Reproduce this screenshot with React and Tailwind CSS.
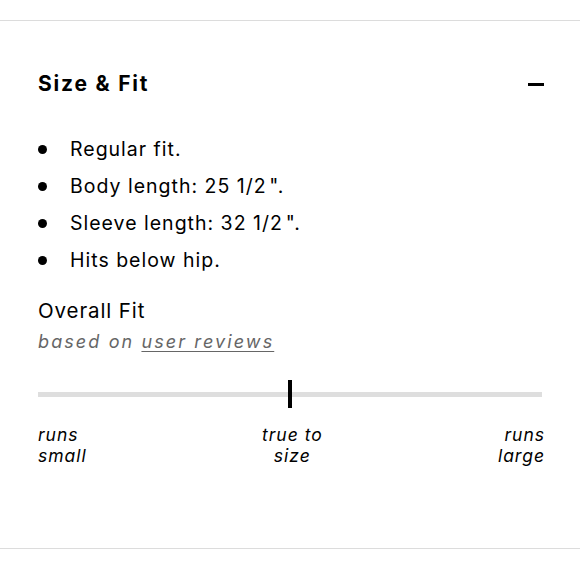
import React from 'react';

const facts = ['Regular fit.', 'Body length: 25 1/2\u200a".', 'Sleeve length: 32 1/2\u200a".', 'Hits below hip.'];

const SizeFit = () => {
  return (
    <div className="w-[580px] h-[580px] bg-white font-['Inter',sans-serif] text-black">
      <div className="pt-[20px]">
        <section className="border-t border-b border-[#dcdcdc] px-[38px] h-[529px]">
          {/* Header */}
          <div className="flex items-center justify-between pt-[49px]">
            <h2 className="text-[21px] font-bold leading-[28px] tracking-[1.8px]">Size &amp; Fit</h2>
            <div className="w-[16px] h-[3px] bg-black mr-[-2px]" />
          </div>

          {/* Facts */}
          <ul className="mt-[33px] flex flex-col">
            {facts.map((f) => (
              <li key={f} className="flex items-center h-[37px] text-[19.5px] tracking-[1px]">
                <span className="w-[9px] h-[9px] rounded-full bg-black mr-[23px]" />
                {f}
              </li>
            ))}
          </ul>

          {/* Overall fit */}
          <div className="mt-[19px]">
            <div className="text-[20.5px] leading-[26px] tracking-[0.9px]">Overall Fit</div>
            <div className="mt-[7px] text-[18px] italic text-[#666] tracking-[2.1px] leading-[22px]">
              based on <span className="underline underline-offset-[3px]">user reviews</span>
            </div>
          </div>

          {/* Slider */}
          <div className="relative mt-[27px] h-[28px] flex items-center">
            <div className="w-full h-[5px] bg-[#dedede]" />
            <div className="absolute left-1/2 top-0 -translate-x-1/2 w-[4px] h-[28px] bg-black" />
          </div>

          <div className="mt-[16px] flex justify-between text-[17.5px] italic leading-[21px] tracking-[1px] mr-[-3px]">
            <div>runs<br />small</div>
            <div className="text-center">true to<br />size</div>
            <div className="text-right">runs<br />large</div>
          </div>
        </section>
      </div>
    </div>
  );
};

export default SizeFit;
